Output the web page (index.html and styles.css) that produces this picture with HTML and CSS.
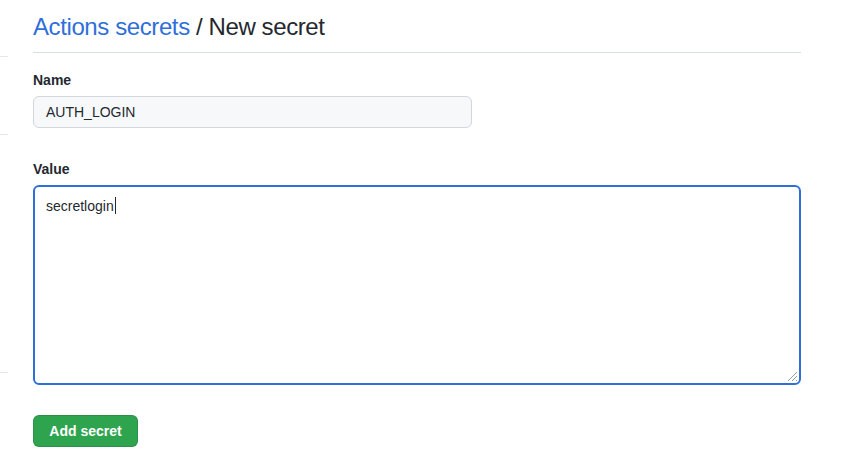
FILE: index.html
```html
<!DOCTYPE html>
<html lang="en">
<head>
<meta charset="utf-8">
<title>New secret</title>
<link rel="stylesheet" href="styles.css">
</head>
<body>
<div class="layout">
  <aside class="sidebar">
    <div class="side-item side-a"></div>
    <div class="side-item side-b"></div>
    <div class="side-item side-c"></div>
  </aside>
  <main class="main">
    <h2 class="title"><a class="crumb" href="#">Actions secrets</a> / New secret</h2>
    <form class="form">
      <div class="group">
        <label class="label">Name</label>
        <div class="input">AUTH_LOGIN</div>
      </div>
      <div class="group">
        <label class="label">Value</label>
        <div class="textarea">secretlogin<span class="caret"></span>
          <svg class="grip" width="12" height="12" viewBox="0 0 12 12">
            <line x1="11" y1="2" x2="2" y2="11" stroke="#9a9a9a" stroke-width="1"/>
            <line x1="11" y1="6" x2="6" y2="11" stroke="#9a9a9a" stroke-width="1"/>
            <line x1="11" y1="10" x2="10" y2="11" stroke="#9a9a9a" stroke-width="1"/>
          </svg>
        </div>
      </div>
      <button class="btn" type="button">Add secret</button>
    </form>
  </main>
</div>
</body>
</html>
```
FILE: styles.css
```css
* { box-sizing: border-box; }
html, body { margin: 0; padding: 0; background: #fff; }
body {
  font-family: "Liberation Sans", Arial, sans-serif;
  font-size: 14px;
  color: #24292f;
  line-height: 1.5;
}
.layout { display: flex; }
.sidebar { width: 8px; flex: none; display: flex; flex-direction: column; }
.side-item { border-bottom: 1px solid #e3e6ea; }
.side-a { height: 57px; }
.side-b { height: 78px; }
.side-c { height: 238px; }
.main { margin-left: 25px; width: 768px; padding-top: 9px; }
.title {
  margin: 0;
  font-size: 24px;
  font-weight: 400;
  line-height: 36px;
  letter-spacing: -0.4px;
  padding-bottom: 7px;
  border-bottom: 1px solid #d8dee4;
  color: #24292f;
}
.crumb { color: #2f6fd9; text-decoration: none; }
.form { display: flex; flex-direction: column; align-items: flex-start; }
.group { width: 100%; margin-top: 17px; }
.group + .group { margin-top: 31px; }
.label { display: block; font-weight: 700; line-height: 21px; margin-bottom: 5px; }
.input {
  width: 439px;
  height: 32px;
  background: #f6f8fa;
  border: 1px solid #d0d7de;
  border-radius: 6px;
  padding: 0 12px;
  line-height: 30px;
}
.textarea {
  position: relative;
  width: 768px;
  height: 200px;
  border: 2px solid #2f6fd9;
  border-radius: 6px;
  padding: 9px 11px;
  line-height: 20px;
}
.caret {
  display: inline-block;
  width: 1px;
  height: 17px;
  background: #24292f;
  vertical-align: -3px;
  margin-left: 1px;
}
.grip { position: absolute; right: 1px; bottom: 1px; }
.btn {
  margin-top: 30px;
  width: 105px;
  height: 32px;
  border: 1px solid rgba(27,31,36,0.15);
  border-radius: 6px;
  background: #2ea44f;
  color: #fff;
  font-family: inherit;
  font-size: 14px;
  font-weight: 700;
  padding: 0;
  cursor: pointer;
}
```
